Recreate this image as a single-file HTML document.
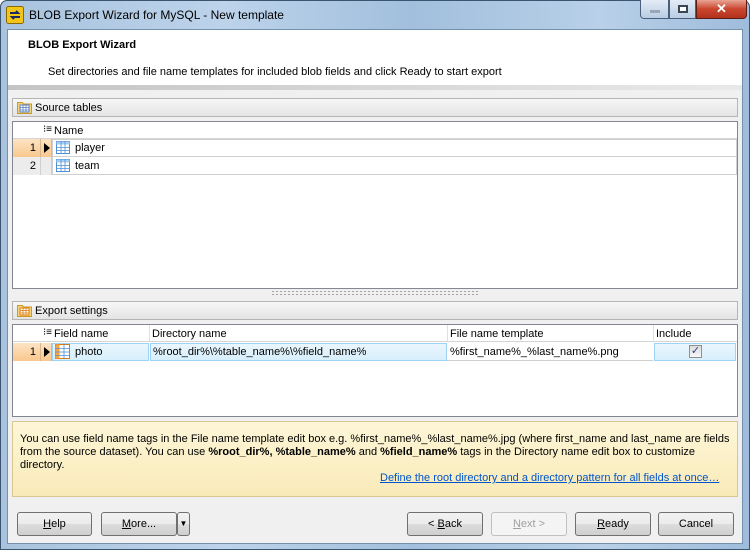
<!DOCTYPE html>
<html><head><meta charset="utf-8">
<style>
*{box-sizing:border-box;margin:0;padding:0}
body{width:750px;height:550px;overflow:hidden;font-family:"Liberation Sans",sans-serif;font-size:11px;color:#000;background:#fff}
.a{position:absolute;white-space:nowrap}
#frame{left:0;top:0;width:750px;height:550px;background:linear-gradient(90deg,#a9c3de 0%,#bcd3ea 30%,#a2bfdd 55%,#b8d0e8 80%,#9fbcdc 100%);border:1px solid #3b5470;border-radius:7px 7px 0 0}
#client{left:7px;top:29px;width:736px;height:515px;background:#f0f0f0;border:1px solid #7590ad}
.bar{background:linear-gradient(#f7f7f7,#e4e4e4);border:1px solid #b5b5b5}
.grid{background:#fff;border:1px solid #828790}
.hdr{background:#fff;border-bottom:1px solid #d5d5d5;height:17px}
.btn{height:24px;border:1px solid #707070;border-radius:3px;background:linear-gradient(#f2f2f2 0%,#ebebeb 50%,#dddddd 50%,#cfcfcf 100%);text-align:center;line-height:22px}
.num{background:linear-gradient(#fde3c3,#f9c88e);text-align:right;padding-right:4px;border-right:1px solid #d8b88f}
.num2{background:#ececec;text-align:right;padding-right:4px;border-right:1px solid #d0d0d0}
.sel{background:linear-gradient(#eaf6fd,#d7effc);border:1px solid #9ed3f5}
u{text-decoration:underline}
</style></head><body>
<div id="frame" class="a"></div>
<svg class="a" style="left:6px;top:6px" width="18" height="18" viewBox="0 0 18 18"><rect x="0.5" y="0.5" width="17" height="17" rx="2" fill="#f3c419" stroke="#8a6a00"/><path d="M4 7h8l-2-2M14 11H6l2 2" stroke="#1a2a60" stroke-width="2" fill="none"/></svg>
<div class="a" style="left:29px;top:8px;font-size:12px;color:#000">BLOB Export Wizard for MySQL - New template</div>
<div class="a" style="left:640px;top:0;width:29px;height:19px;border:1px solid #4a607a;border-top:none;border-radius:0 0 0 4px;background:linear-gradient(#e3ecf6,#b9cde3)"><div class="a" style="left:9px;top:10px;width:10px;height:3px;background:#9aa6b4"></div></div>
<div class="a" style="left:669px;top:0;width:27px;height:19px;border:1px solid #4a607a;border-top:none;background:linear-gradient(#e3ecf6,#b9cde3)"><div class="a" style="left:8px;top:5px;width:10px;height:8px;border:2px solid #3a4654;background:#fff"></div></div>
<div class="a" style="left:696px;top:0;width:51px;height:19px;border:1px solid #5a1d14;border-top:none;border-radius:0 0 4px 0;background:linear-gradient(#e8a493,#c9452e 50%,#b3321c);color:#fff;font-weight:bold;text-align:center;line-height:17px;font-size:13px">✕</div>
<div id="client" class="a"></div>
<div class="a" style="left:8px;top:30px;width:734px;height:55px;background:#fff"></div>
<div class="a" style="left:8px;top:85px;width:734px;height:5px;background:linear-gradient(90deg,#c4c4c4,#e9e9e9)"></div>
<div class="a" style="left:28px;top:39px;font-weight:bold">BLOB Export Wizard</div>
<div class="a" style="left:48px;top:66px">Set directories and file name templates for included blob fields and click Ready to start export</div>
<div class="a bar" style="left:12px;top:98px;width:726px;height:19px"></div>
<svg class="a" style="left:17px;top:100px" width="15" height="14" viewBox="0 0 15 14"><path d="M0.5 2.5h5l1 1.5h8v9.5h-14z" fill="#f5d77a" stroke="#c79a2a"/><rect x="3" y="5" width="9" height="7" fill="#fff" stroke="#5a7fc0"/><path d="M3 7.5h9M3 10h9M6 5v7M9 5v7" stroke="#5a7fc0" stroke-width="0.8"/></svg>
<div class="a" style="left:35px;top:102px">Source tables</div>
<div class="a grid" style="left:12px;top:121px;width:726px;height:168px"></div>
<div class="a hdr" style="left:13px;top:122px;width:724px"></div>
<div class="a" style="left:43px;top:124px;font-size:10px;line-height:12px">⁝≡</div>
<div class="a" style="left:54px;top:125px">Name</div>
<div class="a num" style="left:13px;top:139px;width:28px;height:18px;line-height:18px;font-size:11px">1</div>
<div class="a" style="left:41px;top:139px;width:11px;height:18px;background:linear-gradient(#fde3c3,#f9c88e);border-right:1px solid #d8b88f"></div>
<svg class="a" style="left:44px;top:143px" width="6" height="10"><path d="M0 0L6 5L0 10z" fill="#000"/></svg>
<div class="a" style="left:52px;top:139px;width:685px;height:18px;border:1px solid #cfcfcf"></div>
<div class="a num2" style="left:13px;top:157px;width:28px;height:18px;line-height:18px;font-size:11px">2</div>
<div class="a" style="left:41px;top:157px;width:11px;height:18px;background:#ececec;border-right:1px solid #d0d0d0"></div>
<div class="a" style="left:52px;top:157px;width:685px;height:18px;border:1px solid #cfcfcf;border-top:none"></div>
<svg class="a" style="left:56px;top:141px" width="14" height="13"><rect x="0.5" y="0.5" width="13" height="12" fill="#fff" stroke="#4f8fd6"/><rect x="0.5" y="0.5" width="13" height="3" fill="#a8cdf1"/><path d="M0 6.5h14M0 9.5h14M5 0v13M9 0v13" stroke="#4f8fd6" stroke-width="0.8"/></svg>
<svg class="a" style="left:56px;top:159px" width="14" height="13"><rect x="0.5" y="0.5" width="13" height="12" fill="#fff" stroke="#4f8fd6"/><rect x="0.5" y="0.5" width="13" height="3" fill="#a8cdf1"/><path d="M0 6.5h14M0 9.5h14M5 0v13M9 0v13" stroke="#4f8fd6" stroke-width="0.8"/></svg>
<div class="a" style="left:75px;top:142px">player</div>
<div class="a" style="left:75px;top:160px">team</div>
<div class="a" style="left:271px;top:290px;width:208px;height:5px;background-image:radial-gradient(#a0a0a0 0.8px,transparent 1px);background-size:4px 3px"></div>
<div class="a bar" style="left:12px;top:301px;width:726px;height:19px"></div>
<svg class="a" style="left:17px;top:303px" width="15" height="14" viewBox="0 0 15 14"><path d="M0.5 2.5h5l1 1.5h8v9.5h-14z" fill="#f5d77a" stroke="#c79a2a"/><rect x="3" y="5" width="9" height="7" fill="#fff" stroke="#e07a10"/><path d="M3 7.5h9M3 10h9M6 5v7M9 5v7" stroke="#e07a10" stroke-width="0.8"/></svg>
<div class="a" style="left:35px;top:305px">Export settings</div>
<div class="a grid" style="left:12px;top:324px;width:726px;height:93px"></div>
<div class="a hdr" style="left:13px;top:325px;width:724px"></div>
<div class="a" style="left:43px;top:327px;font-size:10px;line-height:12px">⁝≡</div>
<div class="a" style="left:54px;top:328px">Field name</div>
<div class="a" style="left:149px;top:325px;width:1px;height:17px;background:#e0e0e0"></div>
<div class="a" style="left:152px;top:328px">Directory name</div>
<div class="a" style="left:447px;top:325px;width:1px;height:17px;background:#e0e0e0"></div>
<div class="a" style="left:450px;top:328px">File name template</div>
<div class="a" style="left:653px;top:325px;width:1px;height:17px;background:#e0e0e0"></div>
<div class="a" style="left:656px;top:328px">Include</div>
<div class="a num" style="left:13px;top:343px;width:28px;height:18px;line-height:18px;font-size:11px">1</div>
<div class="a" style="left:41px;top:343px;width:11px;height:18px;background:linear-gradient(#fde3c3,#f9c88e);border-right:1px solid #d8b88f"></div>
<svg class="a" style="left:44px;top:347px" width="6" height="10"><path d="M0 0L6 5L0 10z" fill="#000"/></svg>
<div class="a sel" style="left:52px;top:343px;width:97px;height:18px"></div>
<div class="a sel" style="left:150px;top:343px;width:297px;height:18px"></div>
<div class="a" style="left:447px;top:343px;width:206px;height:18px;border-bottom:1px solid #cfcfcf"></div>
<div class="a sel" style="left:654px;top:343px;width:82px;height:18px"></div>
<svg class="a" style="left:55px;top:344px" width="15" height="15"><rect x="0.5" y="0.5" width="14" height="14" fill="#fff" stroke="#e07a10"/><rect x="0.5" y="0.5" width="4" height="14" fill="#f6a543"/><path d="M0 4.5h15M0 8h15M0 11.5h15M9 0v15" stroke="#4f8fd6" stroke-width="0.8"/></svg>
<div class="a" style="left:75px;top:346px">photo</div>
<div class="a" style="left:153px;top:346px">%root_dir%\%table_name%\%field_name%</div>
<div class="a" style="left:450px;top:346px">%first_name%_%last_name%.png</div>
<div class="a" style="left:689px;top:345px;width:13px;height:13px;border:1px solid #8f8f8f;background:linear-gradient(#dcdcdc,#f8f8f8);color:#2a3f8f;font-size:11px;line-height:11px;text-align:center">✓</div>
<div class="a" style="left:12px;top:421px;width:726px;height:76px;background:linear-gradient(#fdf6d8,#f9eab8);border:1px solid #d8c890"></div>
<div class="a" style="left:20px;top:433px;line-height:13px;width:712px;white-space:normal">You can use field name tags in the File name template edit box e.g. %first_name%_%last_name%.jpg (where first_name and last_name are fields from the source dataset). You can use <b>%root_dir%, %table_name%</b> and <b>%field_name%</b> tags in the Directory name edit box to customize directory.</div>
<div class="a" style="left:380px;top:472px;color:#0055cc;text-decoration:underline">Define the root directory and a directory pattern for all fields at once…</div>
<div class="a btn" style="left:17px;top:512px;width:75px"><u>H</u>elp</div>
<div class="a btn" style="left:101px;top:512px;width:76px"><u>M</u>ore...</div>
<div class="a btn" style="left:177px;top:512px;width:13px;font-size:8px">▼</div>
<div class="a btn" style="left:407px;top:512px;width:76px">&lt; <u>B</u>ack</div>
<div class="a btn" style="left:491px;top:512px;width:76px;color:#a0a0a0;border-color:#c0c0c0;background:#f4f4f4"><u>N</u>ext &gt;</div>
<div class="a btn" style="left:575px;top:512px;width:76px"><u>R</u>eady</div>
<div class="a btn" style="left:658px;top:512px;width:76px">Cancel</div>
</body></html>
